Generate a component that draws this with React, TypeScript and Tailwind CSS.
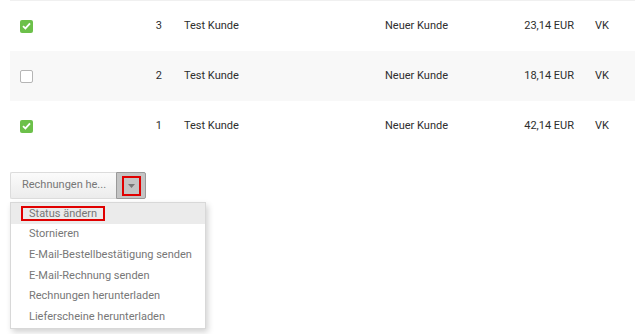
import React from 'react'

const rows = [
  { id: 3, checked: true, name: 'Test Kunde', status: 'Neuer Kunde', amount: '23,14 EUR', type: 'VK' },
  { id: 2, checked: false, name: 'Test Kunde', status: 'Neuer Kunde', amount: '18,14 EUR', type: 'VK' },
  { id: 1, checked: true, name: 'Test Kunde', status: 'Neuer Kunde', amount: '42,14 EUR', type: 'VK' },
]

const actions = [
  'Status ändern',
  'Stornieren',
  'E-Mail-Bestellbestätigung senden',
  'E-Mail-Rechnung senden',
  'Rechnungen herunterladen',
  'Lieferscheine herunterladen',
]

function Checkbox({ checked }: { checked: boolean }) {
  if (checked) {
    return (
      <span className="flex h-[13px] w-[13px] items-center justify-center rounded-[2px] bg-[#6cc04a]">
        <svg width="9" height="8" viewBox="0 0 9 8">
          <path d="M1 4.2 L3.4 6.4 L8 1.4" fill="none" stroke="#fff" strokeWidth="1.8" />
        </svg>
      </span>
    )
  }
  return <span className="block h-[13px] w-[13px] rounded-[2px] border border-[#b5b5b5] bg-white" />
}

export default function App() {
  return (
    <div className="h-[334px] w-[635px] overflow-hidden bg-white pl-[10px] text-[11px]" style={{ fontFamily: 'Roboto, "Liberation Sans", sans-serif' }}>
      <div className="border-t border-[#f0f0f0]">
        {rows.map((r, i) => (
          <div
            key={r.id}
            className={`flex h-[50px] items-center text-[#2e2e2e] ${i === 1 ? 'bg-[#f8f8f8]' : 'bg-white'}`}
          >
            <div className="w-[40px] pl-[10px]">
              <Checkbox checked={r.checked} />
            </div>
            <div className="w-[112px] text-right">{r.id}</div>
            <div className="w-[223px] pl-[22px]">{r.name}</div>
            <div className="w-[100px]">{r.status}</div>
            <div className="w-[89px] text-right">{r.amount}</div>
            <div className="pl-[21px]">{r.type}</div>
          </div>
        ))}
      </div>

      <div className="mt-[21px] flex h-[27px] w-[136px]">
        <button className="flex h-full w-[106px] items-center rounded-l-[2px] border border-r-0 border-[#dcdcdc] bg-gradient-to-b from-[#fbfbfb] to-[#ececec] pl-[11px] text-[#777]">
          Rechnungen he...
        </button>
        <button className="flex h-full w-[30px] items-center justify-center rounded-r-[2px] border border-[#999] bg-[#c4c4c4]">
          <span className="flex h-[20px] w-[19px] items-center justify-center border-2 border-[#e00000]">
            <svg width="7" height="4" viewBox="0 0 7 4">
              <path d="M0 0 L7 0 L3.5 4 Z" fill="#777" />
            </svg>
          </span>
        </button>
      </div>

      <div className="mt-[3px] w-[196px] border border-[#d8d8d8] bg-white text-[#777] shadow-[2px_3px_6px_rgba(0,0,0,0.18)]">
        {actions.map((a, i) => (
          <div
            key={a}
            className={`flex h-[20.8px] items-center pl-[18px] ${i === 0 ? 'bg-[#ebebeb]' : ''}`}
          >
            {i === 0 ? (
              <span className="-ml-[8px] border-2 border-[#e00000] px-[6px] leading-[11px]">{a}</span>
            ) : (
              a
            )}
          </div>
        ))}
      </div>
    </div>
  )
}
